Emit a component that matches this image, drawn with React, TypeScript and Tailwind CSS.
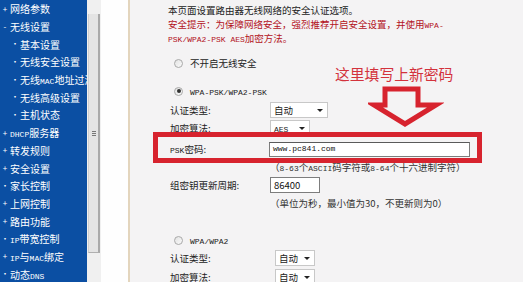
import { FC, ReactNode } from "react"

const cjk = "font-['Noto_Sans_CJK_SC','Noto_Sans',sans-serif]"
const mono = "font-['Liberation_Mono',monospace] text-[8px] leading-none"

type MenuItem = { mark: "+" | "-" | "•"; label: ReactNode; sub?: boolean }

const menu: MenuItem[] = [
  { mark: "+", label: "网络参数" },
  { mark: "-", label: "无线设置" },
  { mark: "•", label: "基本设置", sub: true },
  { mark: "•", label: "无线安全设置", sub: true },
  { mark: "•", label: <>无线<span className={mono}>MAC</span>地址过滤</>, sub: true },
  { mark: "•", label: "无线高级设置", sub: true },
  { mark: "•", label: "主机状态", sub: true },
  { mark: "+", label: <><span className={mono}>DHCP</span>服务器</> },
  { mark: "+", label: "转发规则" },
  { mark: "+", label: "安全设置" },
  { mark: "•", label: "家长控制" },
  { mark: "+", label: "上网控制" },
  { mark: "+", label: "路由功能" },
  { mark: "•", label: <><span className={mono}>IP</span>带宽控制</> },
  { mark: "+", label: <><span className={mono}>IP</span>与<span className={mono}>MAC</span>绑定</> },
  { mark: "•", label: <>动态<span className={mono}>DNS</span></> },
]

const Radio: FC<{ checked?: boolean; children: ReactNode; className?: string }> = ({
  checked,
  children,
  className,
}) => (
  <div className={`flex items-center h-[18px] pl-[44px] gap-[7px] ${className ?? ""}`}>
    <div className="w-[9px] h-[9px] rounded-full border border-[#a9a9a9] bg-gradient-to-br from-[#e2e2e2] to-[#fafafa] grid place-content-center">
      {checked && <div className="w-[4px] h-[4px] rounded-full bg-[#333]" />}
    </div>
    <span className="text-[#222]">{children}</span>
  </div>
)

const Row: FC<{ label: ReactNode; children?: ReactNode; className?: string }> = ({
  label,
  children,
  className,
}) => (
  <div className={`flex items-center h-[18px] pl-[40px] ${className ?? ""}`}>
    <div className="w-[100px] shrink-0 text-[#222]">{label}</div>
    {children}
  </div>
)

const Select: FC<{ value: ReactNode; width: string; className?: string }> = ({
  value,
  width,
  className,
}) => (
  <div
    className={`h-[16px] ${width} bg-white border border-[#c8c8c8] flex items-center justify-between pl-[3px] pr-[4px] ${className ?? ""}`}
  >
    <span className="text-[#222]">{value}</span>
    <span className="w-0 h-0 border-l-[3px] border-r-[3px] border-t-[3px] border-l-transparent border-r-transparent border-t-[#222]" />
  </div>
)

export default function App() {
  return (
    <div className={`w-[523px] h-[282px] overflow-hidden flex text-[9.5px] ${cjk}`}>
      {/* Left menu */}
      <div className="w-[87px] shrink-0 bg-[#0b4fa3] overflow-hidden text-[10px]">
        {menu.map((item, i) => (
          <div
            key={i}
            className={`flex items-center h-[17.7px] whitespace-nowrap text-white ${item.sub ? "pl-[11px]" : "pl-[1px]"}`}
          >
            <span className="w-[8px] text-[8px] text-center leading-none">{item.mark}</span>
            <span className="ml-[1px]">{item.label}</span>
          </div>
        ))}
      </div>

      {/* Scrollbar */}
      <div className="w-[14px] shrink-0 bg-[#f0f0f0] flex flex-col pt-[14px]">
        <div className="h-[239px] mx-[1px] bg-[#e4e4e4] border-l border-[#cfcfcf] border-r-2 border-r-[#a9a9a9] border-b border-b-[#b0b0b0] flex items-center justify-center">
          <div className="flex flex-col gap-[1px]">
            <div className="w-[4px] h-[1px] bg-[#777]" />
            <div className="w-[4px] h-[1px] bg-[#777]" />
            <div className="w-[4px] h-[1px] bg-[#777]" />
          </div>
        </div>
      </div>

      <div className="w-[27px] shrink-0 bg-[#fefefe]" />
      <div className="w-[2px] shrink-0 bg-[#e3d5bd]" />

      {/* Content */}
      <div className="relative flex-1 bg-[#f4f3f4] pt-[3px]">
        <div className="pl-[38px] leading-[14px]">
          <div className="h-[14px] text-[#222]">本页面设置路由器无线网络的安全认证选项。</div>
          <div className="h-[14px] text-[#b3121c] whitespace-nowrap">
            安全提示：为保障网络安全，强烈推荐开启安全设置，并使用<span className={mono}>WPA-</span>
          </div>
          <div className="h-[14px] text-[#b3121c]">
            <span className={mono}>PSK/WPA2-PSK AES</span>加密方法。
          </div>
        </div>

        <Radio className="mt-[9px]">不开启无线安全</Radio>
        <Radio checked className="mt-[10px]">
          <span className={mono}>WPA-PSK/WPA2-PSK</span>
        </Radio>

        <Row label="认证类型:" className="mt-[1px]">
          <Select value="自动" width="w-[58px]" />
        </Row>
        <Row label="加密算法:">
          <Select value={<span className={mono}>AES</span>} width="w-[40px]" />
        </Row>
        <Row label={<><span className={mono}>PSK</span>密码:</>} className="mt-[3px]">
          <div className="h-[15px] w-[201px] -ml-[1px] bg-white border border-[#7d7d7d] border-t-[#5a5a5a] flex items-center pl-[3px]">
            <span className={`${mono} text-[#111]`}>www.pc841.com</span>
          </div>
        </Row>
        <Row label="">
          <span className="text-[#333] whitespace-nowrap">
            （<span className={mono}>8-63</span>个<span className={mono}>ASCII</span>码字符或<span className={mono}>8-64</span>个十六进制字符）
          </span>
        </Row>
        <Row label="组密钥更新周期:">
          <div className="h-[16px] w-[50px] bg-white border border-[#7d7d7d] flex items-center pl-[3px] text-[#111]">
            86400
          </div>
        </Row>
        <Row label="">
          <span className="text-[#333] whitespace-nowrap">（单位为秒，最小值为30，不更新则为0）</span>
        </Row>

        <Radio className="mt-[19px]">
          <span className={mono}>WPA/WPA2</span>
        </Radio>
        <Row label="认证类型:">
          <Select value="自动" width="w-[40px]" className="ml-[5px]" />
        </Row>
        <Row label="加密算法:" className="mt-[1px]">
          <Select value="自动" width="w-[40px]" className="ml-[5px]" />
        </Row>

        {/* Annotation overlay */}
        <div className="absolute left-[205px] top-[65px] text-[14.8px] leading-[18px] text-[#d3323c] whitespace-nowrap">
          这里填写上新密码
        </div>
        <svg
          className="absolute left-[238px] top-[84px]"
          width="76"
          height="44"
          viewBox="0 0 76 44"
        >
          <polygon
            points="17,5 50,5 50,21 68,21 37,40 6,21 17,21"
            fill="none"
            stroke="#d7232e"
            strokeWidth="5"
            strokeLinejoin="miter"
          />
        </svg>
        <div className="absolute left-[23px] top-[132px] w-[329px] h-[31px] border-[5px] border-[#d7232e]" />
      </div>
    </div>
  )
}
